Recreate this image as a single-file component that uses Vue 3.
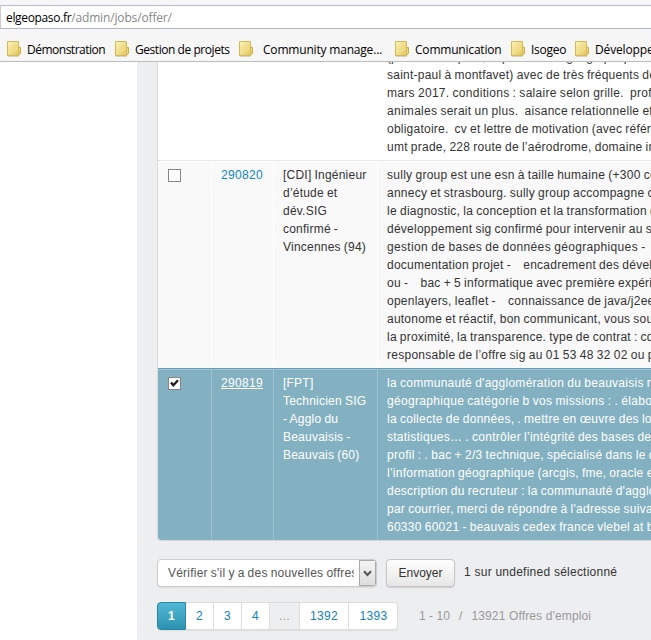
<script setup>
const bookmarks = [
  { label: 'Démonstration', w: 108, gap: 5, ls: -0.5 },
  { label: 'Gestion de projets', w: 124, gap: 5, ls: -0.45 },
  { label: 'Community manage...', w: 156, gap: 9, ls: -0.19 },
  { label: 'Communication', w: 116, gap: 5, ls: -0.2 },
  { label: 'Isogeo', w: 64, gap: 5, ls: -0.25 },
  { label: 'Développement', w: 120, gap: 5, ls: -0.15 },
]

const rows = [
  {
    id: '', kind: 'plain', title: [],
    text: [
      ['(présence requise, déplacements géographiques sur le site,', 0],
      ['saint-paul à montfavet) avec de très fréquents déplacements', 0.24],
      ['mars 2017. conditions : salaire selon grille.\u00a0 profil', 0.29],
      ['animales serait un plus.\u00a0 aisance relationnelle et', 0.28],
      ['obligatoire.\u00a0 cv et lettre de motivation (avec références)', 0.23],
      ['umt prade, 228 route de l’aérodrome, domaine inra', 0.25],
    ],
  },
  {
    id: '290820', kind: 'odd',
    title: ['[CDI] Ingénieur', 'd’étude et', 'dév.SIG', 'confirmé -', 'Vincennes (94)'],
    text: [
      ['sully group est une esn à taille humaine (+300 collaborateurs)', 0.27],
      ['annecy et strasbourg. sully group accompagne ces clients', 0.25],
      ['le diagnostic, la conception et la transformation des', 0.26],
      ['développement sig confirmé pour intervenir au sein', 0.25],
      ['gestion de bases de données géographiques -\u00a0\u00a0\u00a0 ', 0.34],
      ['documentation projet -\u00a0\u00a0\u00a0 encadrement des développeurs', 0.25],
      ['ou -\u00a0\u00a0\u00a0 bac + 5 informatique avec première expérience', 0.25],
      ['openlayers, leaflet -\u00a0\u00a0\u00a0 connaissance de java/j2ee', 0.24],
      ['autonome et réactif, bon communicant, vous souhaitez', 0.23],
      ['la proximité, la transparence. type de contrat : cdi', 0.22],
      ['responsable de l’offre sig au 01 53 48 32 02 ou par', 0.27],
    ],
  },
  {
    id: '290819', kind: 'selected',
    title: ['[FPT]', 'Technicien SIG', '- Agglo du', 'Beauvaisis -', 'Beauvais (60)'],
    text: [
      ["la communauté d'agglomération du beauvaisis recrute", 0.27],
      ['géographique catégorie b vos missions : . élaboration', 0.31],
      ['la collecte de données, . mettre en œuvre des logiciels', 0.26],
      ['statistiques… . contrôler l’intégrité des bases de', 0.25],
      ['profil : . bac + 2/3 technique, spécialisé dans le domaine', 0.28],
      ['l’information géographique (arcgis, fme, oracle et', 0.25],
      ["description du recruteur : la communauté d'agglomération", 0.25],
      ["par courrier, merci de répondre à l'adresse suivante", 0.25],
      ['60330 60021 - beauvais cedex france vlebel at beauvaisis', 0.25],
    ],
  },
]

const pages = ['1', '2', '3', '4', '...', '1392', '1393']
</script>

<template>
  <div class="window">
    <header class="chrome">
      <div class="address"><span class="host">elgeopaso.fr</span><span class="path">/admin/jobs/offer/</span></div>
      <nav class="bookmarks">
        <div v-for="b in bookmarks" :key="b.label" class="bookmark" :style="{ width: b.w + 'px', gap: b.gap + 'px' }">
          <svg class="folder" width="15" height="16" viewBox="0 0 15 16">
            <defs>
              <linearGradient id="fold" x1="0" y1="0" x2="1" y2="1">
                <stop offset="0" stop-color="#fcf3b4" />
                <stop offset="1" stop-color="#e4c860" />
              </linearGradient>
            </defs>
            <path d="M1 15.5h11" stroke="#d8d3c0" />
            <path d="M11 6.500h2.500v6l-1.500 1.500h-2z" fill="#ecd878" stroke="#cbad3f" />
            <path d="M.5.500h11v14H.5z" fill="url(#fold)" stroke="#d4b95a" />
            <path d="M1.500 11.500q6-.5 9.500-5" stroke="#f7eba5" fill="none" opacity=".6" />
          </svg>
          <span :style="{ letterSpacing: b.ls + 'px' }">{{ b.label }}</span>
        </div>
      </nav>
    </header>

    <div class="page">
      <main class="content">
        <div class="table">
          <div v-for="(r, i) in rows" :key="i" class="row" :class="r.kind">
            <div class="cell check">
              <span v-if="r.id" class="box">
                <svg v-if="r.kind === 'selected'" width="11" height="11" viewBox="0 0 11 11">
                  <path d="M2 4.600L4.300 7.300L9 2.300" fill="none" stroke="#1c1c1c" stroke-width="2.300" />
                </svg>
              </span>
            </div>
            <div class="cell"><a class="id">{{ r.id }}</a></div>
            <div class="cell"><div v-for="t in r.title" :key="t" class="line title">{{ t }}</div></div>
            <div class="cell">
              <div v-for="t in r.text" :key="t[0]" class="line" :style="{ letterSpacing: t[1] + 'px' }">{{ t[0] }}</div>
            </div>
          </div>
        </div>

        <div class="actions">
          <div class="select">
            <span class="value"><span>Vérifier s'il y a des nouvelles offres</span></span>
            <span class="arrow">
              <svg width="9" height="7" viewBox="0 0 9 7"><path d="M1 1.300l3.500 3.700L8 1.300" fill="none" stroke="#555" stroke-width="2" /></svg>
            </span>
          </div>
          <button class="send">Envoyer</button>
          <span class="count">1 sur undefined sélectionné</span>
        </div>

        <div class="pager">
          <div class="pages">
            <span v-for="p in pages" :key="p" class="p" :class="{ on: p === '1', dots: p === '...', wide: p.length > 3 }">{{ p }}</span>
          </div>
          <span class="total"><span>1 - 10</span><span>/</span><span class="sum">13921 Offres d'emploi</span></span>
        </div>
      </main>
    </div>
  </div>
</template>

<style>
body { margin: 0; overflow: hidden; }
</style>

<style scoped>
* { box-sizing: border-box; }
.window { width: 651px; height: 640px; overflow: hidden; display: flex; flex-direction: column; background: #fff; font: 12px/18px "Liberation Sans", Arial, sans-serif; color: #333; }
.chrome { flex: none; height: 62px; padding-top: 5px; background: #f6f6f6; border-bottom: 1px solid #bdbdbd; font-family: "Open Sans", "Noto Sans", sans-serif; color: #000; }
.address { height: 24px; background: #fff; border-top: 1px solid #b9bccb; border-bottom: 1px solid #b0b8c8; padding-left: 6px; line-height: 24px; color: #888; white-space: nowrap; box-shadow: inset 1px 0 #ccc; }
.host { color: #000; letter-spacing: -0.34px; }
.path { letter-spacing: -0.15px; }
.bookmarks { display: flex; padding: 12px 0 0 7px; height: 32px; }
.bookmark { flex: none; display: flex; white-space: nowrap; line-height: 17px; }
.folder { flex: none; }
.page { flex: 1; min-height: 0; padding-left: 137px; }
.content { height: 578px; background: #edeef0; padding-left: 20px; overflow: hidden; }
.table { height: 479px; width: 600px; border-left: 1px solid #d9dadc; border-bottom: 1px solid #d4d8da; border-radius: 0 0 0 4px; display: flex; flex-direction: column; justify-content: flex-end; overflow: hidden; background: #fff; }
.row { flex: none; display: grid; grid-template-columns: 53px 62px 104px 1fr; border-top: 1px solid #e6e6e6; }
.cell { border-left: 1px solid #fff; border-top: 1px solid #fff; padding: 4px 0 4px 9px; overflow: hidden; white-space: pre; word-spacing: -0.5px; }
.cell.check { border-left: 0; padding-left: 10px; }
.plain .cell { border-top: 0; }
.odd { background: #f9f9f9; }
.selected { background: #84b1c2; border-top-color: #689eb2; color: #fff; }
.selected .cell { border-color: #9cc3d1; }
.line { height: 18px; }
.title { letter-spacing: 0.22px; }
.id { color: #0f85c9; letter-spacing: 0.33px; }
.selected .id { color: #fff; text-decoration: underline; }
.box { display: block; width: 13px; height: 13px; margin-top: 3px; background: #fff; border: 1px solid #868686; }
.box svg { display: block; }
.actions { display: flex; align-items: flex-start; padding-top: 18px; height: 61px; }
.select { width: 220px; height: 28px; display: flex; background: #fff; border: 1px solid #ccc; border-radius: 4px; box-shadow: 0 1px 1px #ddd; color: #555; overflow: hidden; }
.value { width: 201px; padding: 0 5px 0 10px; line-height: 27px; white-space: nowrap; }
.value span { display: block; overflow: hidden; letter-spacing: 0.22px; word-spacing: -0.5px; }
.arrow { flex: 1; border: 1px solid #aaa; background: linear-gradient(#f3f3f3, #dedede); display: flex; align-items: center; justify-content: center; }
.send { margin-left: 9px; width: 69px; height: 28px; border: 1px solid #c5c5c5; border-radius: 4px; background: linear-gradient(#fff, #e6e6e6); box-shadow: 0 1px 1px #ccc; font: inherit; color: #333; padding: 0; }
.count { margin: 4px 0 0 9px; white-space: nowrap; letter-spacing: 0.24px; }
.pager { display: flex; align-items: center; }
.pages { display: flex; height: 28px; width: 241px; background: #fff; border: 1px solid #ddd; border-radius: 4px; box-shadow: 0 1px 1px #ddd; line-height: 27px; text-align: center; color: #0f80c5; letter-spacing: 0.33px; }
.p { flex: none; width: 28px; border-right: 1px solid #ddd; }
.p.on { width: 29px; margin: -1px 0 -1px -1px; border: 1px solid #2a86a3; border-radius: 4px 0 0 4px; background: linear-gradient(#53b8d6, #2d91b0); color: #fff; font-weight: bold; line-height: 26px; }
.p.dots { width: 30px; background: #edeef0; color: #999; }
.p.wide { width: 49px; }
.p:last-child { border: 0; }
.total { display: flex; gap: 9px; margin-left: 21px; color: #999; white-space: nowrap; letter-spacing: 0.05px; }
.sum { letter-spacing: 0.14px; }
</style>
